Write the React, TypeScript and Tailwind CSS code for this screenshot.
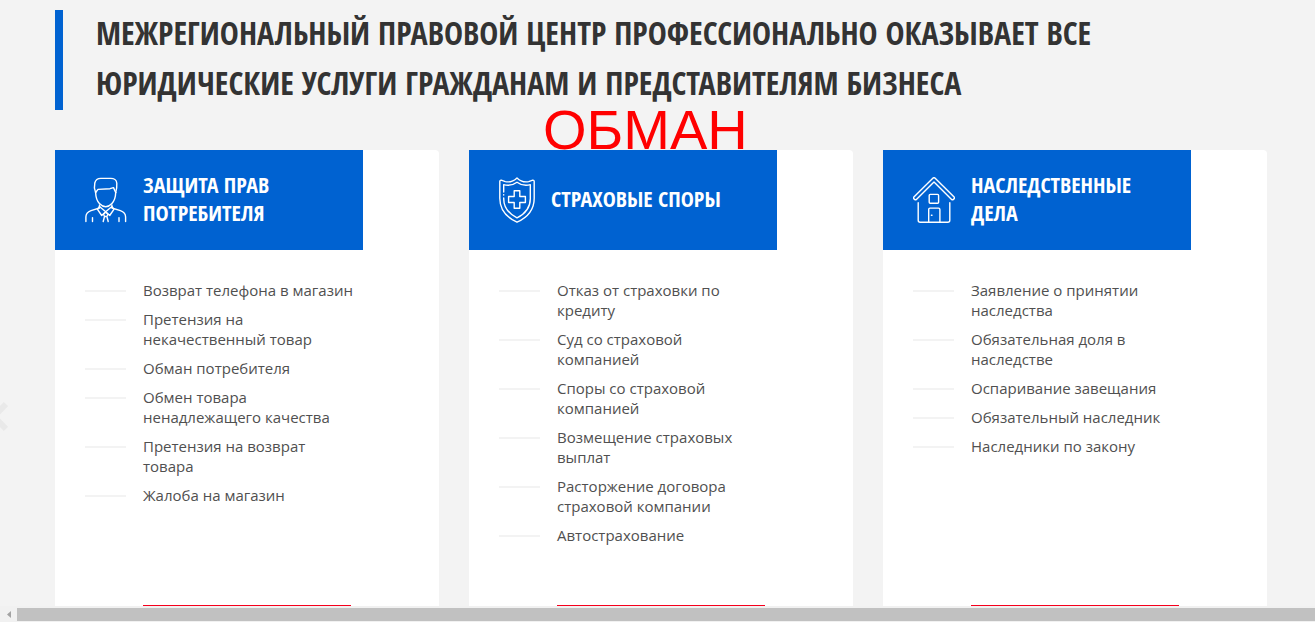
import type { ReactNode } from "react";

function PersonIcon() {
  return (
    <svg width="42" height="46" viewBox="0 0 42 46" fill="none" stroke="white" strokeWidth="1.4" strokeLinecap="round" strokeLinejoin="round" className="shrink-0" aria-hidden="true">
      <path d="M10.6 15.5C9.4 12.5 9.2 8.5 9.8 6c.7-3 3.3-4.6 6-4.6h10c3 0 5.800 1.700 6 4.800.2 3.600-.2 6.600-1.100 9.300" />
      <path d="M10.6 15.500 13 12.400l12-.7 3.500-1.100 2.200 4.900" />
      <path d="M10.600 15.500c.2 4.500 1.400 8.500 3.800 11 1.900 2 4 3.200 6.300 3.200s4.400-1.200 6.200-3.200c2.400-2.600 3.700-6.500 3.800-11" />
      <path d="M14.500 28v3l-8.500 2.600C2.500 34.800.9 37 .9 40v4.600M26.900 28v3l8.500 2.600c3.500 1.200 5.200 3.400 5.200 6.400v4.600" />
      <path d="m14.500 29.500-2 2.900 4.200 6.100 4-3.800-6.200-5.200ZM26.900 29.500l2 2.900-4.200 6.100-4-3.800 6.200-5.200Z" />
      <path d="m20.700 35-2.200 2.200 1 2.300h2.400l1-2.300-2.200-2.200ZM19.500 39.500l-1.300 5M21.900 39.500l1.300 5M7.500 40.600v4M34 40.600v4" />
    </svg>
  );
}

function ShieldIcon() {
  return (
    <svg width="36" height="46" viewBox="0 0 36 46" fill="none" stroke="white" strokeWidth="1.4" strokeLinecap="round" strokeLinejoin="round" className="shrink-0" aria-hidden="true">
      <path d="M18 .9c-3.200 3.200-7.400 4.500-11.700 3.700L2.300 3.200C1.400 3 .8 3.600.8 4.500v16.700C.8 32.800 7.800 40.500 18 45.200 28.200 40.500 35.200 32.800 35.200 21.200V4.500c0-.9-.6-1.500-1.500-1.300l-4 1.400c-4.300.8-8.500-.5-11.700-3.700Z" />
      <path d="M4.700 15V7.700c5 1.400 9.500.3 13.300-2.500 3.800 2.800 8.300 3.900 13.300 2.500v14c0 9-5.100 15-13.300 19.200C9.800 36.700 4.700 30.700 4.700 21.700v-.8M4.700 17.600v.4" />
      <path d="M15.200 13.800h5.600v5.700h5.600v6h-5.600v5.700h-5.600v-5.700H9.600v-6h5.600Z" />
    </svg>
  );
}

function HouseIcon() {
  return (
    <svg width="42" height="46" viewBox="0 0 42 46" fill="none" stroke="white" strokeWidth="1.400" strokeLinecap="round" strokeLinejoin="round" className="shrink-0" aria-hidden="true">
      <path d="M19.800 1.200.9 20.100c-.5.500-.4 1.300.1 1.800l.6.500c.6.500 1.300.5 1.800 0L21 4.900l17.600 17.500c.5.500 1.200.5 1.800 0l.6-.5c.5-.5.600-1.300.1-1.800L22.200 1.200c-.7-.7-1.700-.7-2.400 0Z" />
      <path d="M5.200 25.800v17.400c0 1.200.8 2 2 2h27.600c1.200 0 2-.8 2-2V25.800" />
      <rect x="16.200" y="17.400" width="9.400" height="8.800" rx="1" />
      <path d="M15.700 45V32.500c0-.9.500-1.400 1.400-1.400h8.400c.9 0 1.400.5 1.400 1.400V45M18.400 38.300h.6" />
    </svg>
  );
}

type Service = { title: string; icon: ReactNode; items: string[] };

const services: Service[] = [
  {
    title: "Защита прав потребителя",
    icon: <PersonIcon />,
    items: [
      "Возврат телефона в магазин",
      "Претензия на некачественный товар",
      "Обман потребителя",
      "Обмен товара ненадлежащего качества",
      "Претензия на возврат товара",
      "Жалоба на магазин",
    ],
  },
  {
    title: "Страховые споры",
    icon: <ShieldIcon />,
    items: [
      "Отказ от страховки по кредиту",
      "Суд со страховой компанией",
      "Споры со страховой компанией",
      "Возмещение страховых выплат",
      "Расторжение договора страховой компании",
      "Автострахование",
    ],
  },
  {
    title: "Наследственные дела",
    icon: <HouseIcon />,
    items: [
      "Заявление о принятии наследства",
      "Обязательная доля в наследстве",
      "Оспаривание завещания",
      "Обязательный наследник",
      "Наследники по закону",
    ],
  },
];

function ServiceCard({ title, icon, items }: Service) {
  return (
    <article className="flex flex-col rounded-t bg-white">
      <header className="flex h-[100px] w-[308px] items-center gap-4 bg-[#0062d1] pl-[30px]">
        {icon}
        <h2 className="max-w-[180px] pb-1 font-['Open_Sans_Condensed','Roboto_Condensed',sans-serif] text-[22px] leading-7 font-bold text-white uppercase">
          {title}
        </h2>
      </header>
      <ul className="flex flex-col gap-[9px] pt-[30px] pl-[30px]">
        {items.map((item) => (
          <li key={item} className="flex gap-[17px] text-[15px] leading-5 text-[#505050]">
            <span className="mt-[10px] h-0.5 w-[41px] shrink-0 bg-[#f3f3f3]" />
            <span className="max-w-[211px]">{item}</span>
          </li>
        ))}
      </ul>
      <div className="mt-auto ml-[88px] h-px w-[208px] bg-[#f5001d]" />
    </article>
  );
}

export default function App() {
  return (
    <div className="flex h-screen flex-col overflow-hidden bg-[#f3f3f3] font-['Open_Sans',sans-serif]">
      <main className="relative flex flex-1 flex-col pt-[10px] pr-12 pl-[55px]">
        <h1 className="flex border-l-8 border-[#0062d1] pl-[33px] font-['Open_Sans_Condensed','Roboto_Condensed',sans-serif] text-[32px] leading-[50px] font-bold text-[#333] uppercase">
          <span className="-mt-0.5 mb-0.5">
            Межрегиональный правовой центр профессионально оказывает все
            <br />
            юридические услуги гражданам и представителям бизнеса
          </span>
        </h1>
        <strong className="absolute top-[98px] left-[543px] font-['Liberation_Sans',sans-serif] text-[56px] leading-[64px] font-normal text-[#ff0000]">
          ОБМАН
        </strong>
        <button type="button" aria-label="Назад" className="absolute top-[400px] left-0 h-8 w-2 text-[#e9e9e9]">
          <svg width="8" height="32" viewBox="0 0 8 32" fill="none" stroke="currentColor" strokeWidth="6" aria-hidden="true">
            <path d="M6 4-6 16.500 6 29" />
          </svg>
        </button>
        <section className="mt-10 grid flex-1 grid-cols-3 gap-[30px]">
          {services.map((service) => (
            <ServiceCard key={service.title} {...service} />
          ))}
        </section>
      </main>
      <div className="flex h-4 shrink-0 bg-[#f1f1f1] pt-0.5 pb-px">
        <button type="button" aria-label="Прокрутить влево" className="flex w-[17px] items-center justify-center">
          <svg width="4" height="7" viewBox="0 0 4 7" fill="#a3a3a3" aria-hidden="true">
            <path d="M4 0v7L0 3.500Z" />
          </svg>
        </button>
        <div className="flex-1 bg-[#c1c1c1]" />
      </div>
    </div>
  );
}
